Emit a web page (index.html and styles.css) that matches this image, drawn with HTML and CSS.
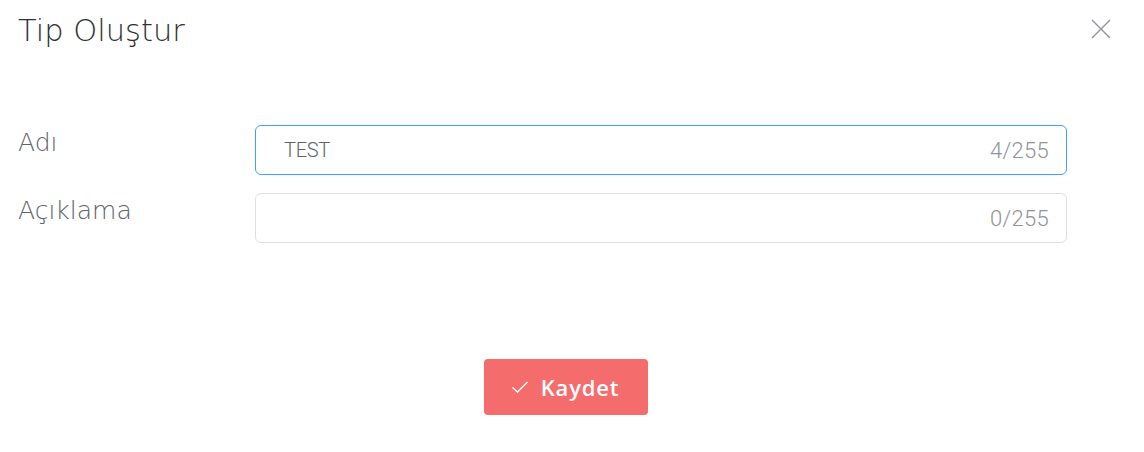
FILE: index.html
```html
<!DOCTYPE html>
<html lang="tr">
<head>
  <meta charset="UTF-8">
  <meta name="viewport" content="width=device-width, initial-scale=1.0">
  <title>Tip Oluştur</title>
  <link rel="stylesheet" href="styles.css">
</head>
<body>
  <div class="dialog">
    <div class="dialog-header">
      <span class="dialog-title">Tip Oluştur</span>
      <button class="dialog-close" aria-label="Kapat">
        <svg width="20" height="20" viewBox="0 0 20 20"><path d="M1 1 L19 19 M19 1 L1 19" stroke="#909399" stroke-width="1.4" fill="none"/></svg>
      </button>
    </div>

    <!-- form -->
    <div class="dialog-body">
      <div class="form-row">
        <label class="form-label">Adı</label>
        <div class="form-input is-focus">
          <span class="form-value">TEST</span>
          <span class="form-count">4/255</span>
        </div>
      </div>
      <div class="form-row">
        <label class="form-label">Açıklama</label>
        <div class="form-input">
          <span class="form-value"></span>
          <span class="form-count">0/255</span>
        </div>
      </div>
    </div>

    <div class="dialog-footer">
      <button class="btn-save">
        <svg width="18" height="14" viewBox="0 0 18 14"><path d="M1.5 7.5 L6.5 12 L16.5 2" stroke="#fff" stroke-width="1.5" fill="none"/></svg>
        <span>Kaydet</span>
      </button>
    </div>
  </div>
</body>
</html>
```

FILE: styles.css
```css
/* dialog */
body {
  margin: 0;
  background-color: #fff;
  font-family: "DejaVu Sans", "Open Sans", sans-serif;
}

.dialog {
  width: 1144px;
  height: 452px;
  display: flex;
  flex-direction: column;
}

.dialog-header {
  display: flex;
  justify-content: space-between;
  align-items: flex-start;
  padding: 0 33px 0 18px;
  height: 70px;
  box-sizing: border-box;
}

.dialog-title {
  font-size: 30.5px;
  font-weight: 200;
  color: #303133;
  padding-top: 13px;
}

.dialog-close {
  background: none;
  border: 0;
  padding: 0;
  margin-top: 19px;
  cursor: pointer;
  display: flex;
}

.dialog-body {
  padding: 55px 77px 0 18px;
  display: flex;
  flex-direction: column;
  gap: 18px;
}

.form-row {
  display: flex;
  align-items: flex-start;
}

.form-label {
  width: 237px;
  flex-shrink: 0;
  font-size: 25px;
  font-weight: 200;
  color: #606266;
  line-height: 36px;
}

.form-input {
  flex: 1;
  height: 50px;
  box-sizing: border-box;
  border: 1px solid #dcdfe6;
  border-radius: 6px;
  display: flex;
  align-items: center;
  justify-content: space-between;
  padding: 0 17px 0 28px;
  font-family: "Roboto", "Liberation Sans", sans-serif;
  font-weight: 300;
}

.form-input.is-focus {
  border-color: #409eff;
}

.form-value {
  color: #606266;
  font-size: 20px;
  letter-spacing: -0.3px;
}

.form-count {
  color: #909399;
  font-size: 22px;
  letter-spacing: 0.3px;
}

.dialog-footer {
  display: flex;
  justify-content: center;
  padding-top: 116px;
  padding-right: 12px;
}

.btn-save {
  width: 164px;
  height: 56px;
  background-color: #f56c6c;
  border: 0;
  border-radius: 4px;
  color: #fff;
  font-family: "Open Sans", "Lato", sans-serif;
  font-size: 22px;
  font-weight: 600;
  letter-spacing: 0.8px;
  display: flex;
  align-items: center;
  justify-content: center;
  gap: 12px;
  padding-left: 4px;
  cursor: pointer;
}
```
